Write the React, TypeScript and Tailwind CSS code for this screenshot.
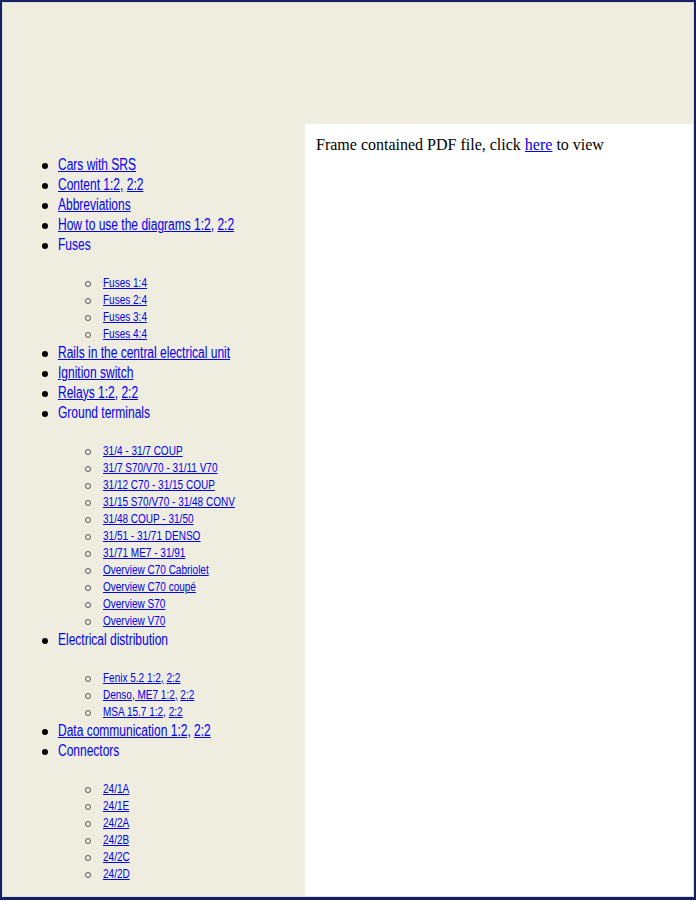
import React from "react";

type Part = { t: string; link?: boolean };
type Item = { parts: Part[]; subs?: Part[][] };

const L = (t: string): Part => ({ t, link: true });
const T = (t: string): Part => ({ t });

const items: Item[] = [
  { parts: [L("Cars with SRS")] },
  { parts: [L("Content 1:2,"), T(" "), L("2:2")] },
  { parts: [L("Abbreviations")] },
  { parts: [L("How to use the diagrams 1:2,"), T(" "), L("2:2")] },
  {
    parts: [T("Fuses")],
    subs: [[L("Fuses 1:4")], [L("Fuses 2:4")], [L("Fuses 3:4")], [L("Fuses 4:4")]],
  },
  { parts: [L("Rails in the central electrical unit")] },
  { parts: [L("Ignition switch")] },
  { parts: [L("Relays 1:2,"), T(" "), L("2:2")] },
  {
    parts: [T("Ground terminals")],
    subs: [
      [L("31/4 - 31/7 COUP")],
      [L("31/7 S70/V70 - 31/11 V70")],
      [L("31/12 C70 - 31/15 COUP")],
      [L("31/15 S70/V70 - 31/48 CONV")],
      [L("31/48 COUP - 31/50")],
      [L("31/51 - 31/71 DENSO")],
      [L("31/71 ME7 - 31/91")],
      [L("Overview C70 Cabriolet")],
      [L("Overview C70 coupé")],
      [L("Overview S70")],
      [L("Overview V70")],
    ],
  },
  {
    parts: [T("Electrical distribution")],
    subs: [
      [L("Fenix 5.2 1:2,"), T(" "), L("2:2")],
      [L("Denso, ME7 1:2,"), T(" "), L("2:2")],
      [L("MSA 15.7 1:2,"), T(" "), L("2:2")],
    ],
  },
  { parts: [L("Data communication 1:2,"), T(" "), L("2:2")] },
  {
    parts: [T("Connectors")],
    subs: [[L("24/1A")], [L("24/1E")], [L("24/2A")], [L("24/2B")], [L("24/2C")], [L("24/2D")]],
  },
];

function Parts({ parts }: { parts: Part[] }) {
  return (
    <>
      {parts.map((p, i) =>
        p.link ? (
          <a key={i} href="#" className="underline decoration-[#0000ee]">
            {p.t}
          </a>
        ) : (
          <span key={i} className="whitespace-pre">
            {p.t}
          </span>
        )
      )}
    </>
  );
}

export default function App() {
  return (
    <div className="w-[696px] h-[900px] bg-[#16205c] pl-[2px] pt-[2px] pr-[2px] pb-[3px]">
      <div className="w-full h-full border border-[#dcdce6] bg-[#efede0] flex flex-col">
        <div className="h-[121px] shrink-0" />
        <div className="flex flex-1 min-h-0">
          <div
            className="w-[302px] shrink-0 pt-[31px] text-[#0000ee] overflow-hidden"
            style={{ fontFamily: '"Liberation Sans", Arial, sans-serif' }}
          >
            {items.map((it, i) => (
              <div key={i}>
                <div className="flex items-center h-[20px] text-[16px] leading-[20px]">
                  <div className="w-[55px] shrink-0 flex justify-end pr-[10px]">
                    <span className="block w-[6px] h-[6px] rounded-full bg-black mt-[2px]" />
                  </div>
                  <div className="whitespace-nowrap origin-left scale-x-[0.75]">
                    <Parts parts={it.parts} />
                  </div>
                </div>
                {it.subs && (
                  <div className="pt-[19px] pb-[1px]">
                    {it.subs.map((s, j) => (
                      <div key={j} className="flex items-center h-[17px] text-[13px] leading-[17px]">
                        <div className="w-[100px] shrink-0 flex justify-end pr-[12px]">
                          <span className="block w-[6px] h-[6px] rounded-full border border-[#555] mt-[2px]" />
                        </div>
                        <div className="whitespace-nowrap origin-left scale-x-[0.77]">
                          <Parts parts={s} />
                        </div>
                      </div>
                    ))}
                  </div>
                )}
              </div>
            ))}
          </div>
          <div
            className="flex-1 bg-white pl-[11px] pt-[11px] text-[16px] leading-[20px] text-black"
            style={{ fontFamily: '"Liberation Serif", "Times New Roman", serif' }}
          >
            Frame contained PDF file, click{" "}
            <a href="#" className="underline text-[#0000ee]">
              here
            </a>{" "}
            to view
          </div>
        </div>
      </div>
    </div>
  );
}
